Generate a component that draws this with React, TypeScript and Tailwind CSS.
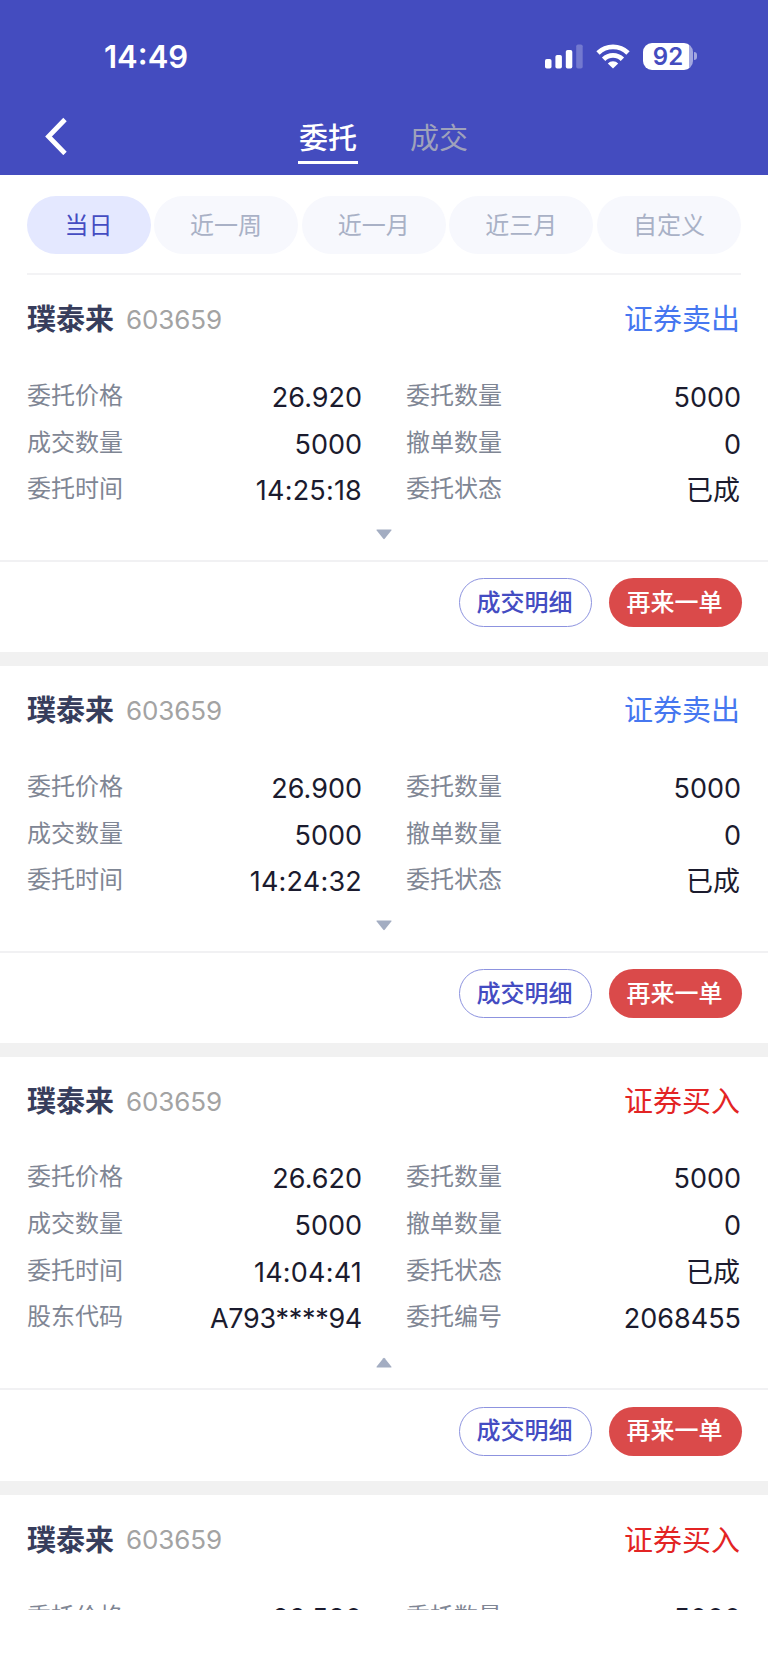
import clsx from 'clsx';

type Field = [string, string];

type Order = {
  side: 'buy' | 'sell';
  expanded?: boolean;
  clipped?: boolean;
  fields: Field[];
};

const ranges = ['当日', '近一周', '近一月', '近三月', '自定义'];

const orders: Order[] = [
  {
    side: 'sell',
    fields: [
      ['委托价格', '26.920'],
      ['委托数量', '5000'],
      ['成交数量', '5000'],
      ['撤单数量', '0'],
      ['委托时间', '14:25:18'],
      ['委托状态', '已成'],
    ],
  },
  {
    side: 'sell',
    fields: [
      ['委托价格', '26.900'],
      ['委托数量', '5000'],
      ['成交数量', '5000'],
      ['撤单数量', '0'],
      ['委托时间', '14:24:32'],
      ['委托状态', '已成'],
    ],
  },
  {
    side: 'buy',
    expanded: true,
    fields: [
      ['委托价格', '26.620'],
      ['委托数量', '5000'],
      ['成交数量', '5000'],
      ['撤单数量', '0'],
      ['委托时间', '14:04:41'],
      ['委托状态', '已成'],
      ['股东代码', 'A793****94'],
      ['委托编号', '2068455'],
    ],
  },
  {
    side: 'buy',
    clipped: true,
    fields: [
      ['委托价格', '26.580'],
      ['委托数量', '5000'],
    ],
  },
];

const StatusBar = () => {
  return (
    <div className="flex h-[112px] items-center justify-between pl-[104px] pr-[71px]">
      <div className="pt-px text-[31px] font-semibold leading-none">14:49</div>
      <div className="flex items-center">
        <svg width="38" height="25" viewBox="0 0 38 25" fill="currentColor">
          <rect x="0" y="15" width="6.5" height="9.5" rx="1.8" />
          <rect x="10.4" y="11" width="6.5" height="13.5" rx="1.8" />
          <rect x="20.8" y="6" width="6.5" height="18.5" rx="1.8" />
          <rect x="31.2" y="0.5" width="6.5" height="24" rx="1.8" opacity="0.25" />
        </svg>
        <svg
          className="ml-[13px]"
          width="34"
          height="25"
          viewBox="0 0 34 25"
          fill="none"
          stroke="currentColor"
          strokeWidth="4.8"
        >
          <path d="M2 9a21.5 21.5 0 0 1 30 0" />
          <path d="M7.6 15.2a13.4 13.4 0 0 1 18.8 0" />
          <path
            d="M17 24.6l-5.2-5.2a7.4 7.4 0 0 1 10.4 0z"
            fill="currentColor"
            stroke="none"
          />
        </svg>
        <div className="ml-[13px] flex items-center">
          <div className="flex h-[27px] w-[50px] items-center justify-center rounded-[9px] bg-[linear-gradient(to_right,#fff_92%,#a3a7df_92%)] pt-px text-[24px] font-semibold leading-none text-[#444cbf]">
            92
          </div>
          <div className="ml-[1px] h-[8px] w-[3px] rounded-r-full bg-[#a3a7df]" />
        </div>
      </div>
    </div>
  );
};

const NavBar = () => {
  return (
    <div className="grid h-[63px] grid-cols-[298px_1fr] pt-[3px]">
      <svg
        className="ml-[43px] mt-[2px]"
        width="26"
        height="38"
        viewBox="0 0 26 38"
        fill="none"
        stroke="currentColor"
        strokeWidth="4.8"
      >
        <path d="M22 2.5L5.500 19.500l16.500 17" />
      </svg>
      <div className="flex gap-[52px] text-[29px]">
        <div className="h-[49px] w-[60px] border-b-[3px] border-white text-center font-medium leading-[48px]">
          委托
        </div>
        <div className="leading-[48px] text-[#9fa2bb]">成交</div>
      </div>
    </div>
  );
};

const RangeTabs = () => {
  return (
    <div className="ml-[26.500px] mr-[27px] flex h-[100px] gap-[3.600px] border-b-2 border-[#f3f3f5] pt-[21px]">
      {ranges.map((range, i) => (
        <div
          key={range}
          className={clsx(
            'h-[58px] rounded-full text-center text-[24px] leading-[60px]',
            i === 0
              ? 'w-[124px] bg-[#e4e8ff] text-[#444cc2]'
              : 'flex-1 bg-[#f7f8fd] text-[#a9b1c6]',
          )}
        >
          {range}
        </div>
      ))}
    </div>
  );
};

const OrderCard = ({ order }: { order: Order }) => {
  return (
    <div className={clsx('overflow-hidden', order.clipped && 'h-[115px] pt-px')}>
      <div className="flex h-[89px] items-center justify-between px-[27px]">
        <div className="flex items-center gap-[12px]">
          <span className="text-[29px] font-bold leading-none text-[#373d5c]">
            璞泰来
          </span>
          <span className="text-[26px] leading-none tracking-[-0.1px] text-[#a3a3a3]">
            603659
          </span>
        </div>
        <span
          className={clsx(
            'pr-[1px] text-[29px] leading-none',
            order.side === 'sell' ? 'text-[#4677f0]' : 'text-[#e32424]',
          )}
        >
          {order.side === 'sell' ? '证券卖出' : '证券买入'}
        </span>
      </div>
      <div
        className={clsx(
          'grid grid-cols-[335px_335px] justify-between gap-x-[44px] px-[27px]',
          order.expanded ? 'pt-[9px]' : 'pt-[10px]',
        )}
      >
        {order.fields.map(([label, value]) => (
          <div key={label} className="flex h-[46.700px] justify-between">
            <span className="text-[24px] leading-[44px] text-[#7f8694]">
              {label}
            </span>
            <span
              className={clsx(
                'text-[27px] leading-[48px] text-[#1b1b2e]',
                value.includes(':') && 'tracking-[0.2px]',
                value.includes('*') && 'tracking-[-0.3px]',
                value === '已成' && 'pr-px',
              )}
            >
              {value}
            </span>
          </div>
        ))}
      </div>
      {!order.clipped && (
        <>
          <div className="flex h-[46px] justify-center pt-[15px]">
            <svg
              width="16"
              height="11"
              viewBox="0 0 16 11"
              fill="#a3adc2"
              className={clsx(order.expanded && 'rotate-180')}
            >
              <path d="M1 0.500h14q1 0 .3 1L8.700 9.800q-.7.8-1.400 0L.7 1.500q-.7-1 .3-1z" />
            </svg>
          </div>
          <div
            className={clsx(
              'flex justify-end gap-[17px] border-t-2 border-[#f1f1f3] pl-[27px] pr-[26.500px] text-[24px] font-medium leading-[46px]',
              order.expanded ? 'h-[93px] pt-[17px]' : 'h-[92px] pt-[16px]',
            )}
          >
            <button className="h-[49px] w-[133px] rounded-full border-[1.500px] border-[#8d93df] pr-px text-[#444cc2]">
              成交明细
            </button>
            <button className="h-[49px] w-[133px] rounded-full bg-[#da4a4a] pr-px text-white">
              再来一单
            </button>
          </div>
          <div className="h-[14px] bg-[#f1f1f1]" />
        </>
      )}
    </div>
  );
};

export default function App() {
  return (
    <div className="h-[1670px] w-[768px] overflow-hidden bg-white font-['Inter','Noto_Sans_CJK_SC',sans-serif]">
      <div className="h-[175px] bg-[#444cbf] text-white">
        <StatusBar />
        <NavBar />
      </div>
      <RangeTabs />
      {orders.map((order, i) => (
        <OrderCard key={i} order={order} />
      ))}
    </div>
  );
}
